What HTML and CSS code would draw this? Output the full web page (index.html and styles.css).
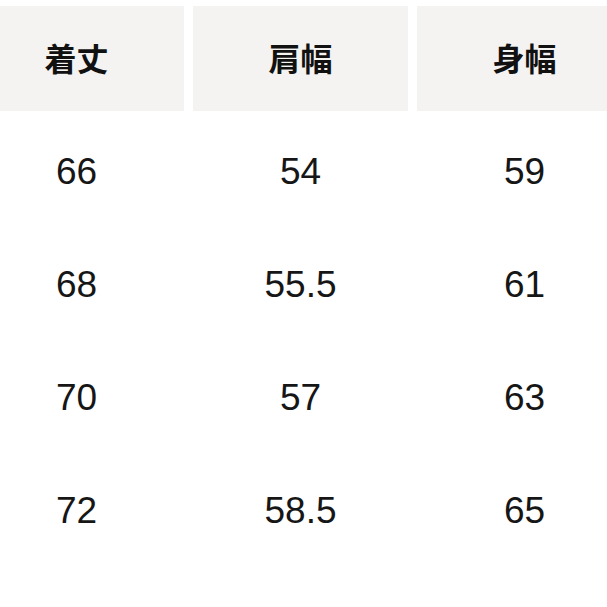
FILE: index.html
```html
<!DOCTYPE html>
<html lang="ja">
<head>
<meta charset="utf-8">
<link rel="stylesheet" href="styles.css">
</head>
<body>
<div class="table">
  <div class="head">着丈</div>
  <div class="head">肩幅</div>
  <div class="head">身幅</div>

  <div class="cell">66</div>
  <div class="cell">54</div>
  <div class="cell">59</div>

  <div class="cell">68</div>
  <div class="cell">55.5</div>
  <div class="cell">61</div>

  <div class="cell">70</div>
  <div class="cell">57</div>
  <div class="cell">63</div>

  <div class="cell">72</div>
  <div class="cell">58.5</div>
  <div class="cell">65</div>
</div>
</body>
</html>
```

FILE: styles.css
```css
html, body {
  margin: 0;
  padding: 0;
  background: #ffffff;
  overflow: hidden;
  width: 607px;
  height: 607px;
}

.table {
  display: grid;
  grid-template-columns: 215px 215px 215px;
  grid-template-rows: 109.5px repeat(4, 113px);
  column-gap: 9px;
  row-gap: 0;
  margin-left: -31px;
  padding-top: 6px;
}

.head {
  background: #f4f3f1;
  display: flex;
  align-items: center;
  justify-content: center;
  margin-bottom: 4.5px;
  padding-bottom: 4px;
  font-family: "Noto Sans CJK JP", "Noto Sans", sans-serif;
  font-weight: 700;
  font-size: 32px;
  color: #111111;
}

.cell {
  display: flex;
  align-items: center;
  justify-content: center;
  font-family: "Liberation Sans", Arial, sans-serif;
  font-size: 37px;
  color: #161616;
}
```
